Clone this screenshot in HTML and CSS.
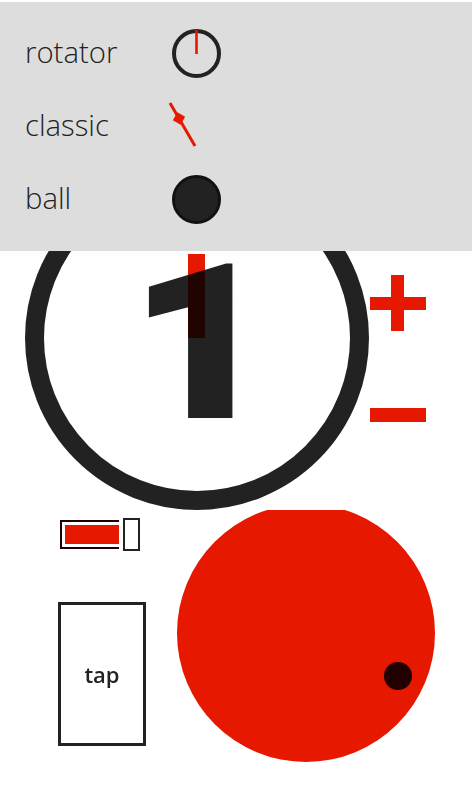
FILE: index.html
```html
<!DOCTYPE html>
<html lang="en">
<head>
    <meta charset="UTF-8">
    <meta name="viewport" content="width=device-width, initial-scale=1.0">
    <title>Counter</title>
    <link rel="stylesheet" href="styles.css">
</head>
<body>
    <div class="page">
        <div class="menu">
            <div class="menu-row">
                <span class="menu-label">rotator</span>
                <svg class="menu-icon" width="51" height="51" viewBox="0 0 51 51">
                    <circle cx="25.5" cy="25.5" r="22.5" fill="none" stroke="#222" stroke-width="4"/>
                    <rect x="24.2" y="2" width="2.6" height="24" fill="#e71800"/>
                </svg>
            </div>
            <div class="menu-row">
                <span class="menu-label">classic</span>
                <svg class="menu-icon" width="51" height="51" viewBox="0 0 51 51">
                    <line x1="-1" y1="2" x2="24" y2="45" stroke="#e71800" stroke-width="3"/>
                    <rect x="3.5" y="13" width="9" height="9" fill="#e71800" transform="rotate(30 8 17.5)"/>
                </svg>
            </div>
            <div class="menu-row">
                <span class="menu-label">ball</span>
                <svg class="menu-icon" width="51" height="51" viewBox="0 0 51 51">
                    <circle cx="25.5" cy="25.5" r="23" fill="#222" stroke="#111" stroke-width="3"/>
                </svg>
            </div>
        </div>

        <div class="top">
            <div class="dial">
                <span class="dial-number">1</span>
                <div class="dial-hand"></div>
            </div>
            <div class="stepper">
                <div class="plus"></div>
                <div class="minus"></div>
            </div>
        </div>

        <div class="bottom">
            <div class="controls">
                <div class="slider">
                    <div class="slider-track"><div class="slider-fill"></div></div>
                    <div class="slider-thumb"></div>
                </div>
                <div class="tap">tap</div>
            </div>
            <div class="ball-clip">
                <div class="ball">
                    <div class="ball-dot"></div>
                </div>
            </div>
        </div>
    </div>
</body>
</html>
```

FILE: styles.css
```css
html, body {
    margin: 0;
    background-color: #fff;
}
.page {
    position: relative;
    width: 472px;
    height: 787px;
    overflow: hidden;
    color: #222;
    font-family: "Open Sans", "Liberation Sans", sans-serif;
}

/* menu lies over the dial */
.menu {
    position: absolute;
    top: 2px;
    left: 0;
    right: 0;
    height: 249px;
    padding-top: 15px;
    box-sizing: border-box;
    background-color: #ddd;
    z-index: 2;
}
.menu-row {
    display: flex;
    align-items: center;
    height: 73px;
    padding-left: 25px;
}
.menu-label {
    width: 146px;
    margin-bottom: 4px;
    font-size: 29.3px;
    font-weight: 300;
}
.menu-icon {
    display: block;
    overflow: visible;
}

.top {
    display: flex;
    padding: 166px 0 0 25px;
}
.dial {
    position: relative;
    display: flex;
    justify-content: center;
    align-items: center;
    width: 344px;
    height: 344px;
    box-sizing: border-box;
    border: 19px solid #222;
    border-radius: 50%;
}
.dial-number {
    font-family: Roboto, sans-serif;
    font-size: 212px;
    font-weight: 900;
    line-height: 1;
    -webkit-text-stroke: 4px #222;
    transform: translate(4px, 6px) scaleX(1.14);
}
.dial-hand {
    position: absolute;
    left: 144px;
    top: 69px;
    width: 17px;
    height: 84px;
    background-color: #e71800;
    mix-blend-mode: multiply;
}
.stepper {
    display: flex;
    flex-direction: column;
    gap: 77px;
    padding: 109px 0 0 1px;
}
.plus {
    position: relative;
    width: 56px;
    height: 56px;
}
.plus::before, .plus::after {
    content: "";
    position: absolute;
    background-color: #e71800;
}
.plus::before {
    left: 0;
    top: 22px;
    width: 56px;
    height: 13px;
}
.plus::after {
    left: 21px;
    top: 0;
    width: 13px;
    height: 56px;
}
.minus {
    width: 56px;
    height: 14px;
    background-color: #e71800;
}

.bottom {
    display: flex;
}
.controls {
    width: 177px;
    padding-left: 58px;
    box-sizing: border-box;
}
.slider {
    display: flex;
    align-items: center;
    gap: 4px;
    margin: 8px 0 51px 2px;
}
.slider-track {
    width: 59px;
    height: 29px;
    box-sizing: border-box;
    padding: 3px 0 3px 3px;
    border: 2px solid #200000;
    border-right: none;
}
.slider-fill {
    height: 100%;
    background-color: #e71800;
}
.slider-thumb {
    width: 17px;
    height: 33px;
    box-sizing: border-box;
    border: 2px solid #222;
}
.tap {
    display: flex;
    justify-content: center;
    align-items: center;
    width: 88px;
    height: 144px;
    box-sizing: border-box;
    border: 3px solid #222;
    font-size: 22px;
    font-weight: 600;
}
.ball-clip {
    width: 258px;
    height: 252px;
    overflow: hidden;
}
.ball {
    position: relative;
    width: 258px;
    height: 258px;
    margin-top: -6px;
    border-radius: 50%;
    background-color: #e71800;
}
.ball-dot {
    position: absolute;
    left: 207px;
    top: 158px;
    width: 28px;
    height: 28px;
    border-radius: 50%;
    background-color: #200000;
}
```
